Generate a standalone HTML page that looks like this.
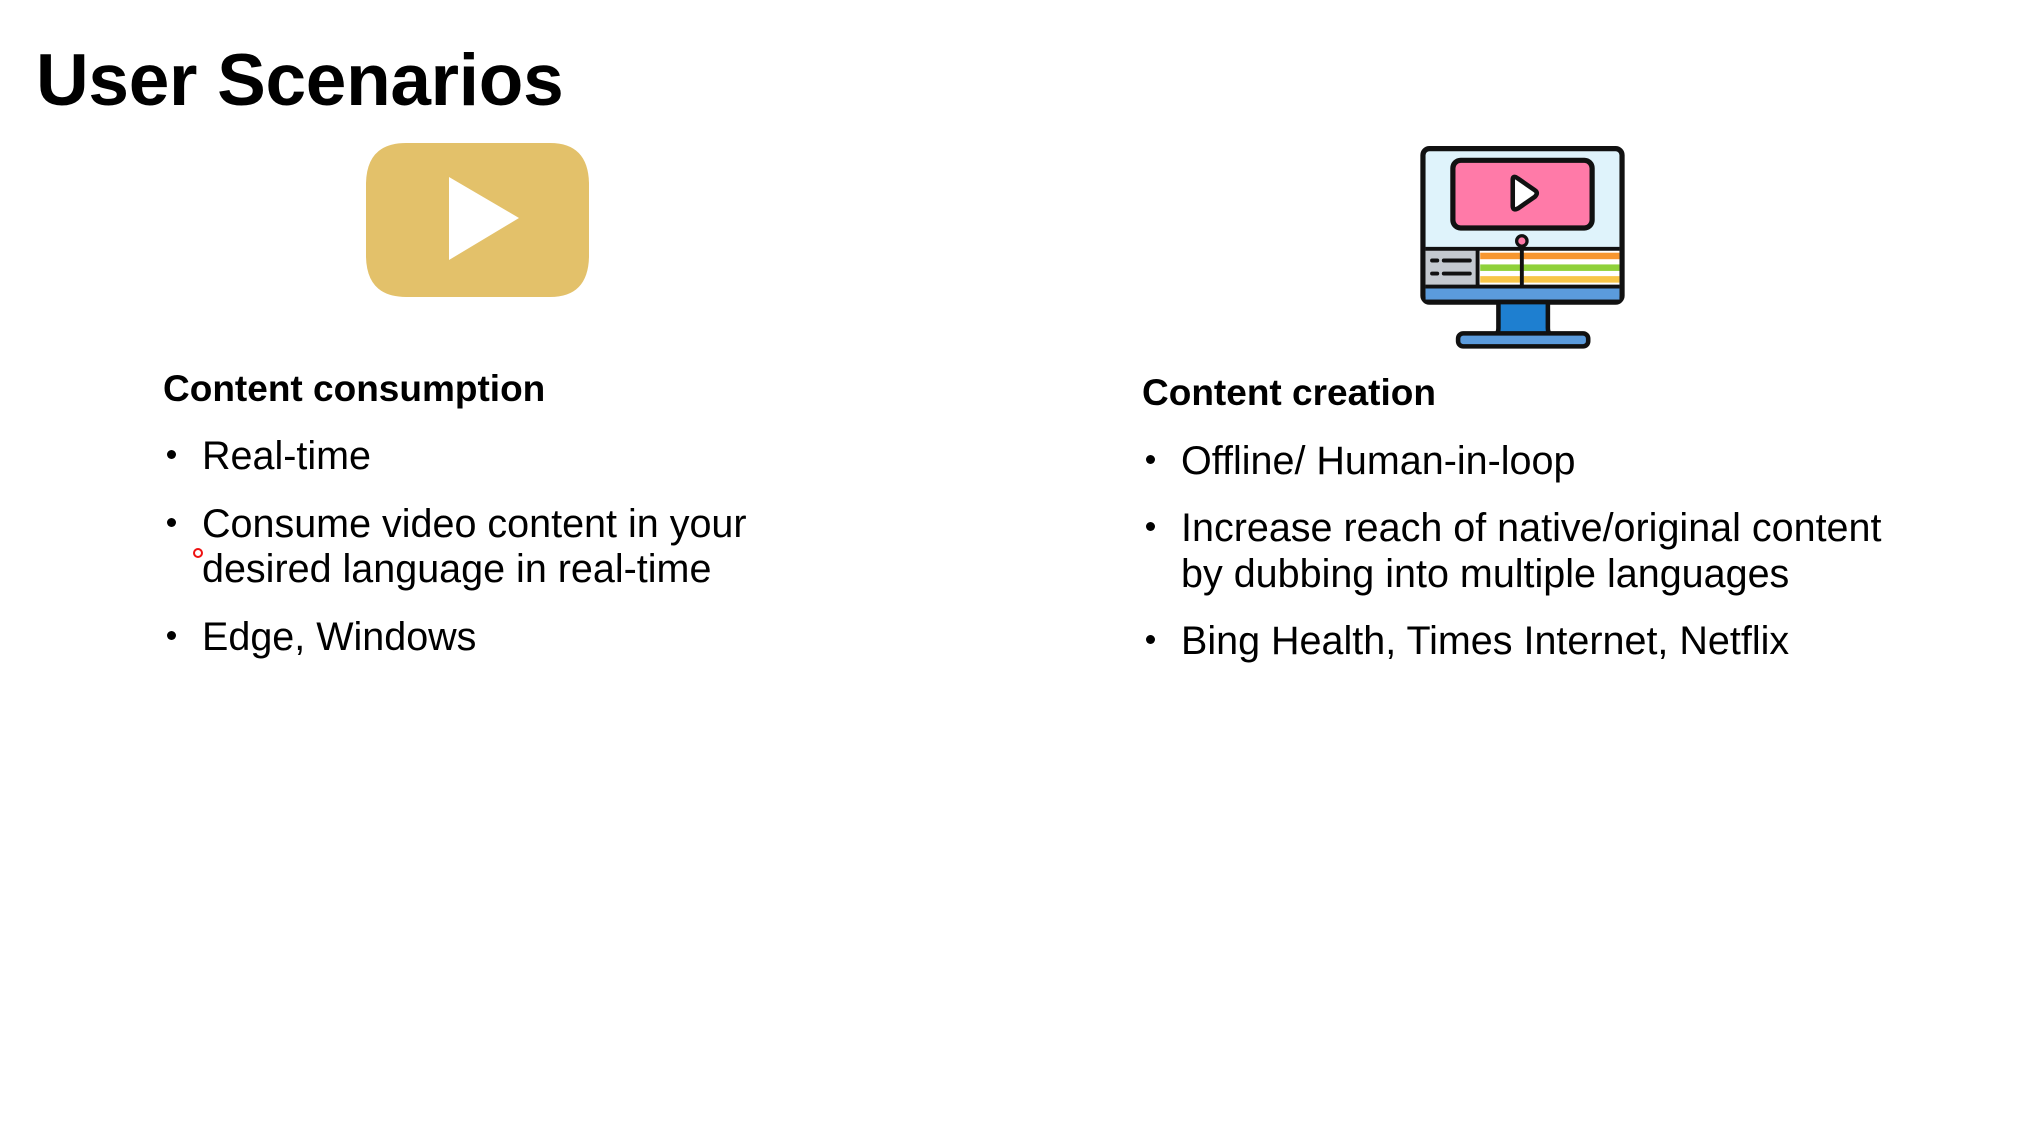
<!DOCTYPE html>
<html><head><meta charset="utf-8"><style>
html,body{margin:0;padding:0;background:#fff;}
body{width:2042px;height:1134px;position:relative;overflow:hidden;font-family:"Liberation Sans",sans-serif;color:#000;}
.t{position:absolute;white-space:nowrap;line-height:1;}
.title{left:36px;top:44px;font-size:73px;font-weight:bold;letter-spacing:-0.3px;}
.h{font-size:37px;font-weight:bold;}
.b{font-size:39.5px;}
.dot{position:absolute;width:9px;height:9px;border-radius:50%;background:#000;}
</style></head><body>
<div class="t title">User Scenarios</div>

<svg style="position:absolute;left:366px;top:143px" width="224" height="154" viewBox="0 0 224 154">
<path d="M40 0 H184 Q222 0 223 40 V114 Q222 154 184 154 H40 Q1 154 0 114 V40 Q1 0 40 0Z" fill="#E3C16A"/>
<polygon points="83,34 153,75 83,117" fill="#fff"/>
</svg>

<svg style="position:absolute;left:1420px;top:146px" width="205" height="203" viewBox="0 0 157 156">
<rect x="2" y="2" width="153" height="118" rx="5" fill="#dff3fb" stroke="#111" stroke-width="4"/>
<rect x="4" y="80" width="149" height="28" fill="#fff"/>
<rect x="4" y="80" width="40" height="28" fill="#c4c9cf"/>
<rect x="46" y="82" width="107" height="5" fill="#f7962f"/>
<rect x="46" y="91" width="107" height="5" fill="#8fd13a"/>
<rect x="46" y="100" width="107" height="5" fill="#f7c548"/>
<line x1="4" y1="79" x2="153" y2="79" stroke="#111" stroke-width="3"/>
<line x1="44" y1="79" x2="44" y2="108" stroke="#111" stroke-width="3"/>
<line x1="9" y1="88" x2="13" y2="88" stroke="#111" stroke-width="3" stroke-linecap="round"/>
<line x1="18" y1="88" x2="38" y2="88" stroke="#111" stroke-width="3" stroke-linecap="round"/>
<line x1="9" y1="98" x2="13" y2="98" stroke="#111" stroke-width="3" stroke-linecap="round"/>
<line x1="18" y1="98" x2="38" y2="98" stroke="#111" stroke-width="3" stroke-linecap="round"/>
<rect x="4" y="108" width="149" height="10" fill="#5b9bdc"/>
<line x1="4" y1="108" x2="153" y2="108" stroke="#111" stroke-width="3"/>
<rect x="25" y="11" width="107" height="52" rx="6" fill="#ff7aa8" stroke="#111" stroke-width="4"/>
<path d="M71 26 L71 46 Q71 50 75 48 L88 39 Q91 36 88 34 L75 25 Q71 22 71 26Z" fill="#fff" stroke="#111" stroke-width="3.5" stroke-linejoin="round"/>
<line x1="78" y1="74" x2="78" y2="108" stroke="#111" stroke-width="3"/>
<circle cx="78" cy="73" r="4" fill="#ff7aa8" stroke="#111" stroke-width="2.5"/>
<path d="M60 120 H98 V140 Q98 146 104 146 H54 Q60 146 60 140Z" fill="#1e7fd0" stroke="#111" stroke-width="3.5" stroke-linejoin="round"/>
<rect x="29" y="144" width="100" height="10" rx="4" fill="#5b9bdc" stroke="#111" stroke-width="3.5"/>
</svg>

<div class="t h" style="left:163px;top:370px">Content consumption</div>
<div class="dot" style="left:167px;top:450px"></div>
<div class="t b" style="left:202px;top:437px">Real-time</div>
<div class="dot" style="left:167px;top:518px"></div>
<div class="t b" style="left:202px;top:505px">Consume video content in your</div>
<div class="t b" style="left:202px;top:550px">desired language in real-time</div>
<div style="position:absolute;left:193px;top:548px;width:6px;height:6px;border:2px solid #e11;border-radius:50%"></div>
<div class="dot" style="left:167px;top:631px"></div>
<div class="t b" style="left:202px;top:618px">Edge, Windows</div>

<div class="t h" style="left:1142px;top:374px">Content creation</div>
<div class="dot" style="left:1146px;top:455px"></div>
<div class="t b" style="left:1181px;top:442px">Offline/ Human-in-loop</div>
<div class="dot" style="left:1146px;top:522px"></div>
<div class="t b" style="left:1181px;top:509px">Increase reach of native/original content</div>
<div class="t b" style="left:1181px;top:555px">by dubbing into multiple languages</div>
<div class="dot" style="left:1146px;top:635px"></div>
<div class="t b" style="left:1181px;top:622px">Bing Health, Times Internet, Netflix</div>
</body></html>
